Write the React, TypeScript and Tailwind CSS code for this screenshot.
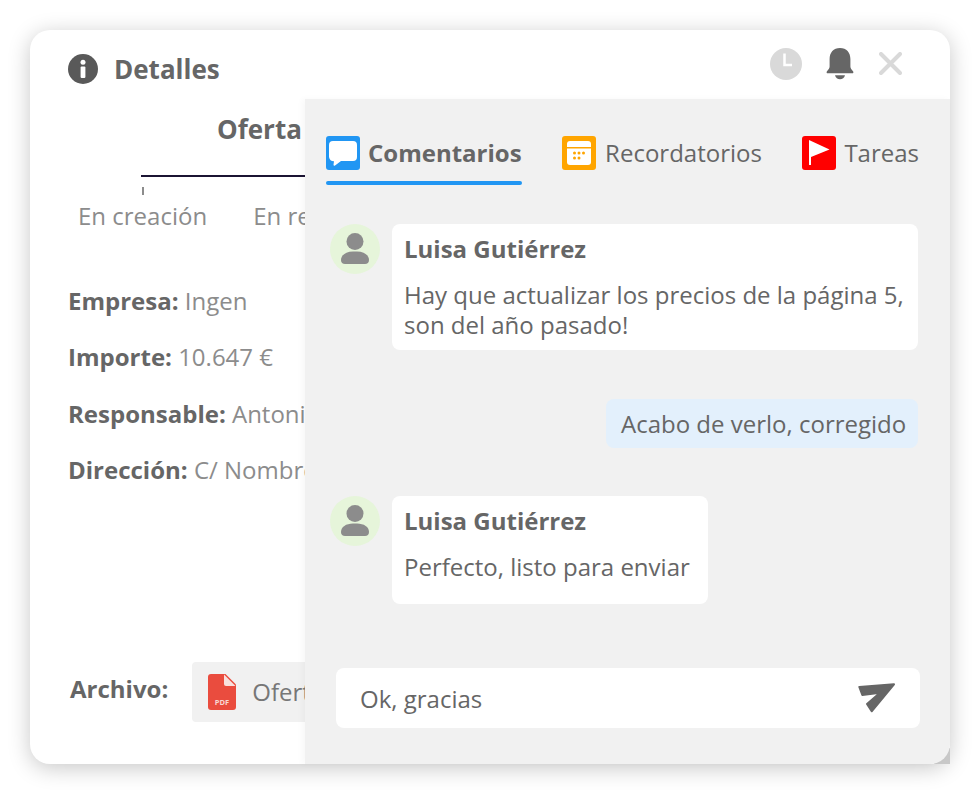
const font = { fontFamily: '"Open Sans", sans-serif' };

const InfoIcon = () => (
  <svg width="30" height="30" viewBox="0 0 30 30">
    <circle cx="15" cy="15" r="15" fill="#595959" />
    <circle cx="15" cy="8.200" r="2.500" fill="#fff" />
    <rect x="12.600" y="12.400" width="4.800" height="11.600" rx="1" fill="#fff" />
  </svg>
);

const ClockIcon = () => (
  <svg width="32" height="32" viewBox="0 0 32 32">
    <circle cx="16" cy="16" r="16" fill="#d9d9d9" />
    <path d="M14.500 5.500v11.500h7.500" fill="none" stroke="#fff" strokeWidth="2.500" />
  </svg>
);

const BellIcon = () => (
  <svg width="28" height="32" viewBox="0 0 28 32">
    <path
      d="M14 0C7.500 0 3.600 4.600 3.600 11v7.600c0 2-1.200 3.200-2.600 4.600-.8.800-.5 2.100.8 2.100h24.400c1.300 0 1.600-1.300.8-2.100-1.400-1.400-2.600-2.600-2.600-4.600V11C24.400 4.600 20.500 0 14 0z"
      fill="#666"
    />
    <path d="M9 27.200h10c-.6 2.400-2.600 4-5 4s-4.400-1.600-5-4z" fill="#666" />
  </svg>
);

const CloseIcon = () => (
  <svg width="23" height="23" viewBox="0 0 23 23">
    <path d="M2 2l19 19M21 2L2 21" stroke="#d9d9d9" strokeWidth="4" strokeLinecap="round" />
  </svg>
);

const ChatIcon = () => (
  <svg width="34" height="34" viewBox="0 0 34 34">
    <rect width="34" height="34" rx="3" fill="#2196f3" />
    <path
      d="M7 5h20a4 4 0 0 1 4 4v12a4 4 0 0 1-4 4H15l-6 4.500c-.8.500-1.500.200-1.500-.800L8 25.200A5 5 0 0 1 3 21V9a4 4 0 0 1 4-4z"
      fill="#fff"
    />
  </svg>
);

const CalendarIcon = () => (
  <svg width="34" height="34" viewBox="0 0 34 34">
    <rect width="34" height="34" rx="3" fill="#ffa500" />
    <path d="M8 5h18a3 3 0 0 1 3 3v3H5V8a3 3 0 0 1 3-3z" fill="#fff" />
    <path d="M5 12.500h24V26a3 3 0 0 1-3 3H8a3 3 0 0 1-3-3z" fill="#fff" />
    <g fill="#ffa500">
      <circle cx="12.500" cy="17" r="1.500" />
      <circle cx="17" cy="17" r="1.500" />
      <circle cx="21.500" cy="17" r="1.500" />
      <circle cx="12.500" cy="22" r="1.500" />
      <circle cx="17" cy="22" r="1.500" />
    </g>
  </svg>
);

const FlagIcon = () => (
  <svg width="34" height="34" viewBox="0 0 34 34">
    <rect width="34" height="34" rx="3" fill="#ff0000" />
    <path d="M7 4l20.500 9.500L9 21v8H7z" fill="#fff" />
  </svg>
);

const PdfIcon = () => (
  <svg width="28" height="36" viewBox="0 0 28 36">
    <path d="M3 0h14.500L28 10.500V33a3 3 0 0 1-3 3H3a3 3 0 0 1-3-3V3a3 3 0 0 1 3-3z" fill="#ea4c3e" />
    <path d="M16 0.500L27.500 12H18a2 2 0 0 1-2-2z" fill="#f8e0dd" />
    <text x="14" y="31" textAnchor="middle" fontSize="7.500" fontWeight="700" fill="#f8d8d4" style={font}>
      PDF
    </text>
  </svg>
);

const SendIcon = () => (
  <svg width="38" height="30" viewBox="0 0 38 30">
    <path
      d="M1.300 4L36 1.300L13.700 28.300L9 21L22 9.700L4.300 12z"
      fill="#666"
      stroke="#666"
      strokeWidth="2"
      strokeLinejoin="round"
    />
  </svg>
);

const Avatar = () => (
  <div className="flex h-[50px] w-[50px] shrink-0 items-center justify-center rounded-full bg-[#e6f5da]">
    <svg width="28" height="32" viewBox="0 0 28 32">
      <circle cx="14" cy="8.500" r="8.500" fill="#8c8c8c" />
      <path d="M12 18.500h4c7 0 12 3.500 12 8.500 0 2.500-1.500 4-4 4H4c-2.500 0-4-1.500-4-4 0-5 5-8.500 12-8.500z" fill="#8c8c8c" />
    </svg>
  </div>
);

const fields = [
  ["Empresa:", "Ingen"],
  ["Importe:", "10.647 €"],
  ["Responsable:", "Antonio Pérez"],
  ["Dirección:", "C/ Nombre de la calle, 12"],
];

const App = () => {
  return (
    <div className="h-[792px] w-[980px] overflow-hidden bg-white p-[30px]" style={font}>
      <div className="relative h-[734px] w-[920px] rounded-[20px] bg-white shadow-[0_4px_22px_rgba(0,0,0,0.22)]">
        <div className="flex h-full flex-col overflow-hidden rounded-[20px] pb-[42px] pl-[38px] pt-6 text-[24px] text-[#8c8c8c]">
          <div className="flex h-[30px] items-center gap-4">
            <InfoIcon />
            <h1 className="text-[26px] font-bold text-[#666]">Detalles</h1>
          </div>

          <div className="mt-[28px] whitespace-nowrap pl-[73px]">
            <div className="pl-[76px] text-[26px] font-bold leading-[34px] text-[#666]">Oferta</div>
            <div className="mt-[29px] h-[2px] w-[300px] bg-[#1b1433]" />
            <div className="ml-[1px] mt-[10px] h-[8px] w-[2px] bg-[#8c8c8c]" />
          </div>
          <div className="mt-[5px] flex gap-[46px] whitespace-nowrap pl-[10px] leading-[32px]">
            <span>En creación</span>
            <span>En revisión</span>
          </div>

          <div className="mt-[53px] flex flex-col gap-[24.33px] whitespace-nowrap">
            {fields.map(([label, value]) => (
              <div key={label} className="leading-[32px]">
                <span className="font-bold text-[#666]">{label}</span> {value}
              </div>
            ))}
          </div>

          <div className="mt-auto flex items-center gap-[24px] pl-[2px]">
            <span className="-mt-[6px] font-bold text-[#666]">Archivo:</span>
            <div className="flex h-[60px] w-[300px] items-center gap-4 rounded bg-[#f1f1f1] pl-4 whitespace-nowrap">
              <PdfIcon />
              <span className="text-[#777]">Oferta.pdf</span>
            </div>
          </div>
        </div>

        <button className="absolute right-[148px] top-[18px] flex">
          <ClockIcon />
        </button>
        <button className="absolute right-[96px] top-[18px] flex">
          <BellIcon />
        </button>
        <button className="absolute right-[48px] top-[22px] flex">
          <CloseIcon />
        </button>

        <div className="absolute bottom-0 right-0 h-[16px] w-[16px] bg-[#c8c8c8]" />

        <div className="absolute bottom-0 right-0 top-[69px] flex w-[645px] flex-col rounded-br-[20px] bg-[#f1f1f1] pl-[21px] pr-[32px] pt-[37px] text-[#666] shadow-[-3px_0_6px_rgba(0,0,0,0.03)]">
          <div className="flex items-start justify-between whitespace-nowrap text-[24px] leading-[34px]">
            <div className="flex flex-col">
              <div className="flex items-center gap-2">
                <ChatIcon />
                <span className="font-bold">Comentarios</span>
              </div>
              <div className="mt-[11px] h-[4px] rounded-sm bg-[#2196f3]" />
            </div>
            <div className="flex items-center gap-[9px]">
              <CalendarIcon />
              <span>Recordatorios</span>
            </div>
            <div className="-mr-[1px] flex items-center gap-2">
              <FlagIcon />
              <span>Tareas</span>
            </div>
          </div>

          <div className="mt-[39px] flex flex-col pl-1 text-[24px] leading-[30px]">
            <div className="flex gap-3">
              <Avatar />
              <div className="h-[126px] w-[526px] rounded-lg bg-white px-3 pt-[10px]">
                <div className="font-bold">Luisa Gutiérrez</div>
                <p className="mt-[16px]">Hay que actualizar los precios de la página 5, son del año pasado!</p>
              </div>
            </div>

            <div className="mt-[49px] flex h-[49px] w-[312px] items-center self-end rounded-lg bg-[#e3f0fc] pl-[15px] whitespace-nowrap">
              Acabo de verlo, corregido
            </div>

            <div className="mt-[48px] flex gap-3">
              <Avatar />
              <div className="h-[108px] w-[316px] rounded-lg bg-white px-3 pt-[10px]">
                <div className="font-bold">Luisa Gutiérrez</div>
                <p className="mt-[16px]">Perfecto, listo para enviar</p>
              </div>
            </div>
          </div>

          <div className="absolute bottom-[36px] left-[31px] flex h-[60px] w-[584px] items-center justify-between rounded-lg bg-white pl-6 pr-6 text-[24px]">
            <span className="mt-[2px]">Ok, gracias</span>
            <SendIcon />
          </div>
        </div>
      </div>
    </div>
  );
};

export default App;
